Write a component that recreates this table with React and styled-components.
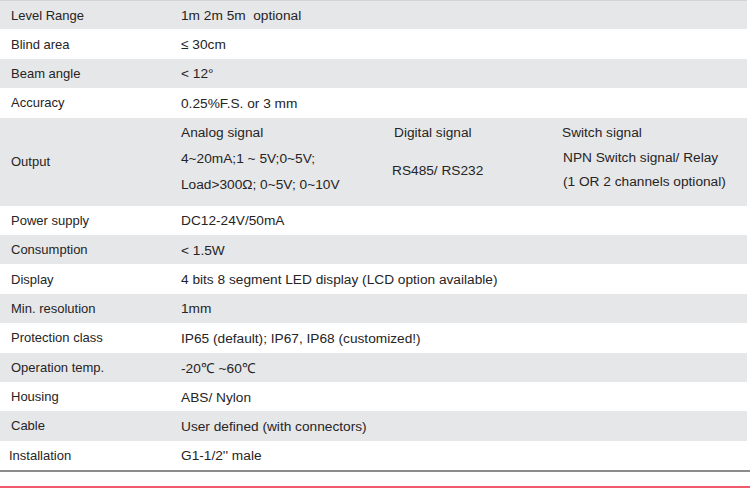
import React from "react";
import styled, { createGlobalStyle } from "styled-components";

const Global = createGlobalStyle`
  html, body { margin: 0; padding: 0; background: #fff; }
  body { font-family: "Liberation Sans", Arial, sans-serif; color: #262425; }
`;

const Page = styled.div`
  width: 750px;
  height: 488px;
  display: flex;
  flex-direction: column;
`;

const Table = styled.div`
  width: 747px;
  border-top: 1px solid #d3d4d6;
  display: flex;
  flex-direction: column;
`;

const Row = styled.div`
  display: flex;
  align-items: center;
  height: ${(p) => p.$h || 29.4}px;
  background: ${(p) => (p.$shade ? "#e6e7e8" : "#ffffff")};
  font-size: 13px;
`;

const Label = styled.div`
  width: 181px;
  box-sizing: border-box;
  padding-left: ${(p) => p.$pad ?? 11}px;
  flex-shrink: 0;
  white-space: nowrap;
`;

const Value = styled.div`
  white-space: pre;
  font-size: 13.7px;
  padding-top: 1px;
`;

const OutputGrid = styled.div`
  display: grid;
  grid-template-columns: 211px 170px auto;
  align-items: center;
  height: 100%;
  font-size: 13.7px;
`;

const SignalCol = styled.div`
  display: flex;
  flex-direction: column;
  height: 100%;
  box-sizing: border-box;
  padding-top: ${(p) => p.$top ?? 2}px;
`;

const SignalLine = styled.div`
  height: ${(p) => p.$h || 25}px;
  line-height: ${(p) => p.$h || 25}px;
  white-space: nowrap;
  margin-top: ${(p) => p.$mt || 0}px;
  margin-left: ${(p) => p.$ml || 0}px;
`;

const Rule = styled.div`
  height: 2px;
  background: #8c8c8c;
  width: 750px;
`;

const Spacer = styled.div`
  flex: 1;
`;

const Accent = styled.div`
  height: 2px;
  background: #f2596c;
  width: 750px;
`;

const rowsTop = [
  ["Level Range", "1m 2m 5m  optional"],
  ["Blind area", "≤ 30cm"],
  ["Beam angle", "< 12°"],
  ["Accuracy", "0.25%F.S. or 3 mm"],
];

const rowsBottom = [
  ["Power supply", "DC12-24V/50mA"],
  ["Consumption", "< 1.5W"],
  ["Display", "4 bits 8 segment LED display (LCD option available)"],
  ["Min. resolution", "1mm"],
  ["Protection class", "IP65 (default); IP67, IP68 (customized!)"],
  ["Operation temp.", "-20℃ ~60℃"],
  ["Housing", "ABS/ Nylon"],
  ["Cable", "User defined (with connectors)"],
  ["Installation", "G1-1/2'' male", 9],
];

export default function App() {
  return (
    <Page>
      <Global />
      <Table>
        {rowsTop.map(([l, v], i) => (
          <Row key={l} $shade={i % 2 === 0} $h={i === 0 ? 28.4 : 29.4}>
            <Label>{l}</Label>
            <Value>{v}</Value>
          </Row>
        ))}
        <Row $shade $h={88}>
          <Label>Output</Label>
          <OutputGrid>
            <SignalCol>
              <SignalLine $h={26}>Analog signal</SignalLine>
              <SignalLine $h={26}>4~20mA;1 ~ 5V;0~5V;</SignalLine>
              <SignalLine $h={26}>Load&gt;300Ω; 0~5V; 0~10V</SignalLine>
            </SignalCol>
            <SignalCol>
              <SignalLine $h={26} $ml={2}>Digital signal</SignalLine>
              <SignalLine $h={26} $mt={12}>RS485/ RS232</SignalLine>
            </SignalCol>
            <SignalCol>
              <SignalLine $h={26}>Switch signal</SignalLine>
              <SignalLine $h={24} $ml={1}>NPN Switch signal/ Relay</SignalLine>
              <SignalLine $h={24} $ml={1}>(1 OR 2 channels optional)</SignalLine>
            </SignalCol>
          </OutputGrid>
        </Row>
        {rowsBottom.map(([l, v, pad], i) => (
          <Row key={l} $shade={i % 2 === 1} $h={29.4}>
            <Label $pad={pad}>{l}</Label>
            <Value>{v}</Value>
          </Row>
        ))}
      </Table>
      <Rule />
      <Spacer />
      <Accent />
    </Page>
  );
}
